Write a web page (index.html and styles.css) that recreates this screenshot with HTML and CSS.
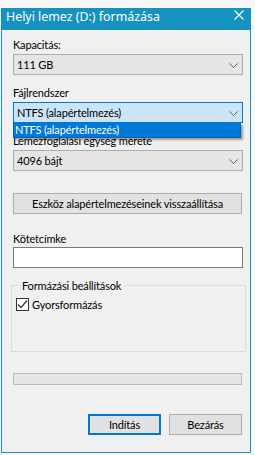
FILE: index.html
```html
<!DOCTYPE html>
<html lang="hu">
<head>
  <meta charset="UTF-8">
  <title>Helyi lemez (D:) formázása</title>
  <link rel="stylesheet" href="styles.css">
</head>
<body>

  <!-- Formázás párbeszédablak -->
  <div class="window">
    <div class="titlebar">
      <span class="title">Helyi lemez (D:) formázása</span>
      <svg class="close" width="10" height="10" viewBox="0 0 10 10">
        <path d="M0.5 0.5 L9.5 9.5 M9.5 0.5 L0.5 9.5" stroke="#fff" stroke-width="1.1" fill="none"/>
      </svg>
    </div>

    <div class="client">
      <div class="label first">Kapacitás:</div>
      <div class="combo">
        <span>111 GB</span>
        <svg class="chevron" width="9" height="5" viewBox="0 0 9 5"><path d="M0.5 0.5 L4.5 4.5 L8.5 0.5" stroke="#606060" fill="none"/></svg>
      </div>

      <div class="label">Fájlrendszer</div>
      <div class="combo-wrap">
        <div class="combo focused">
          <span>NTFS (alapértelmezés)</span>
          <svg class="chevron" width="9" height="5" viewBox="0 0 9 5"><path d="M0.5 0.5 L4.5 4.5 L8.5 0.5" stroke="#606060" fill="none"/></svg>
        </div>
        <div class="droplist">NTFS (alapértelmezés)</div>
      </div>

      <div class="label">Lemezfoglalási egység mérete</div>
      <div class="combo">
        <span>4096 bájt</span>
        <svg class="chevron" width="9" height="5" viewBox="0 0 9 5"><path d="M0.5 0.5 L4.5 4.5 L8.5 0.5" stroke="#606060" fill="none"/></svg>
      </div>

      <button class="btn reset">Eszköz alapértelmezéseinek visszaállítása</button>

      <div class="label volume">Kötetcímke</div>
      <div class="textbox"></div>

      <fieldset class="options">
        <legend>Formázási beállítások</legend>
        <div class="check">
          <span class="box">
            <svg width="11" height="11" viewBox="0 0 11 11"><path d="M1 5.5 L4 8.5 L10 1.5" stroke="#333" stroke-width="1.2" fill="none"/></svg>
          </span>
          Gyorsformázás
        </div>
      </fieldset>

      <div class="progress"></div>

      <div class="actions">
        <button class="btn default">Indítás</button>
        <button class="btn">Bezárás</button>
      </div>
    </div>
  </div>

</body>
</html>
```

FILE: styles.css
```css
* { box-sizing: border-box; margin: 0; padding: 0; }
body {
  background: #f6f6f6;
  font-family: Lato, "Noto Sans", sans-serif;
  font-size: 11px;
  letter-spacing: -0.15px;
  color: #000;
}

.window {
  margin: 8px 0 0 1px;
  width: 250px;
  height: 445px;
  background: #f0f0f0;
  border: 1px solid #1592bf;
  border-top: 0;
}
.titlebar {
  display: flex;
  justify-content: space-between;
  align-items: flex-start;
  height: 22px;
  margin: 0 -1px;
  padding: 0 7px 0 5px;
  background: #1592bf;
  color: #fff;
}
.title { font-family: "Noto Sans", sans-serif; font-size: 12.4px; letter-spacing: 0; line-height: 16px; margin-top: 1px; }
.close { margin-top: 2px; }

.client { padding: 0 7px 0 11px; }
.label { line-height: 15px; margin-top: 10px; margin-bottom: 2px; white-space: nowrap; }
.label.first { margin-top: 7px; }
.label.volume { margin-top: 17px; margin-bottom: 1px; }

.combo {
  display: flex;
  justify-content: space-between;
  align-items: center;
  height: 21px;
  padding: 0 4px 0 3px;
  background: #e5e5e5;
  border: 1px solid #acacac;
  line-height: 15px;
}
.combo.focused { background: #cce4f7; border-color: #0078d7; }
.chevron { margin-top: 1px; }

.combo-wrap { position: relative; }
.droplist {
  position: absolute;
  top: 100%;
  left: 0;
  right: 2px;
  height: 15px;
  padding-left: 1px;
  line-height: 14px;
  background: #0078d7;
  color: #fff;
  border: 1px solid #0a5fa6;
  border-top: 0;
  box-shadow: 2px 2px 2px rgba(0, 0, 0, 0.35);
}

.btn {
  display: block;
  height: 21px;
  font-family: inherit;
  font-size: inherit;
  letter-spacing: inherit;
  color: #000;
  background: #e1e1e1;
  border: 1px solid #adadad;
}
.btn.reset { width: 229px; margin-top: 22px; }
.btn.default { border: 2px solid #0078d7; }

.textbox {
  height: 21px;
  background: #fff;
  border: 1px solid #7a7a7a;
}

.options {
  margin: 10px -3px 0 -2px;
  padding: 0 5px 39px 4px;
  border: 1px solid #dcdcdc;
}
.options legend { margin-left: 4px; padding: 0 2px; line-height: 15px; }
.check {
  display: flex;
  align-items: center;
  gap: 3px;
  margin-top: 4px;
  line-height: 15px;
}
.box {
  display: flex;
  align-items: center;
  justify-content: center;
  width: 13px;
  height: 13px;
  background: #fff;
  border: 1px solid #333;
}

.progress {
  height: 12px;
  margin: 21px 1px 0 0;
  background: #e6e6e6;
  border: 1px solid #bcbcbc;
}

.actions {
  display: flex;
  justify-content: flex-end;
  gap: 8px;
  margin: 29px 1px 0 0;
}
.actions .btn { width: 73px; }
```
